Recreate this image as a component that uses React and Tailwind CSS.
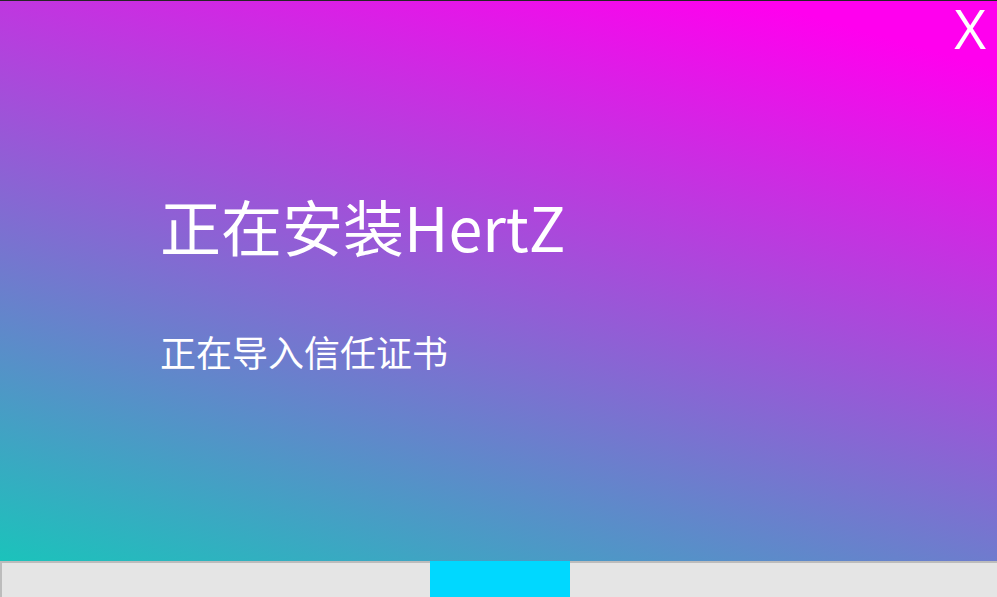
export default function App() {
  return (
    <div className="w-[997px] h-[597px] flex flex-col overflow-hidden" style={{ fontFamily: '"Noto Sans CJK SC", "Noto Sans", sans-serif' }}>
      <div className="relative flex-1 border-t border-[#262626] bg-[linear-gradient(16deg,#1bc3bb_0%,#ff00ee_92%)]">
        <div className="flex justify-end items-start h-[64px]">
          <button className="mr-[11px] text-white text-[55px] leading-[54px]" style={{ fontFamily: '"Open Sans", sans-serif' }}>X</button>
        </div>
        <div className="pl-[160px] pt-[130px] text-white">
          <div className="text-[61px] leading-none">正在安装HertZ</div>
          <div className="mt-[77px] text-[36px] leading-none">正在导入信任证书</div>
        </div>
      </div>
      <div className="h-[36px] flex bg-[#e5e5e5]">
        <div className="w-[430px] border-t-2 border-l-2 border-[#bcbcbc]"></div>
        <div className="w-[140px] bg-[#00d8ff]"></div>
        <div className="flex-1 border-t-2 border-[#bcbcbc]"></div>
      </div>
    </div>
  );
}
